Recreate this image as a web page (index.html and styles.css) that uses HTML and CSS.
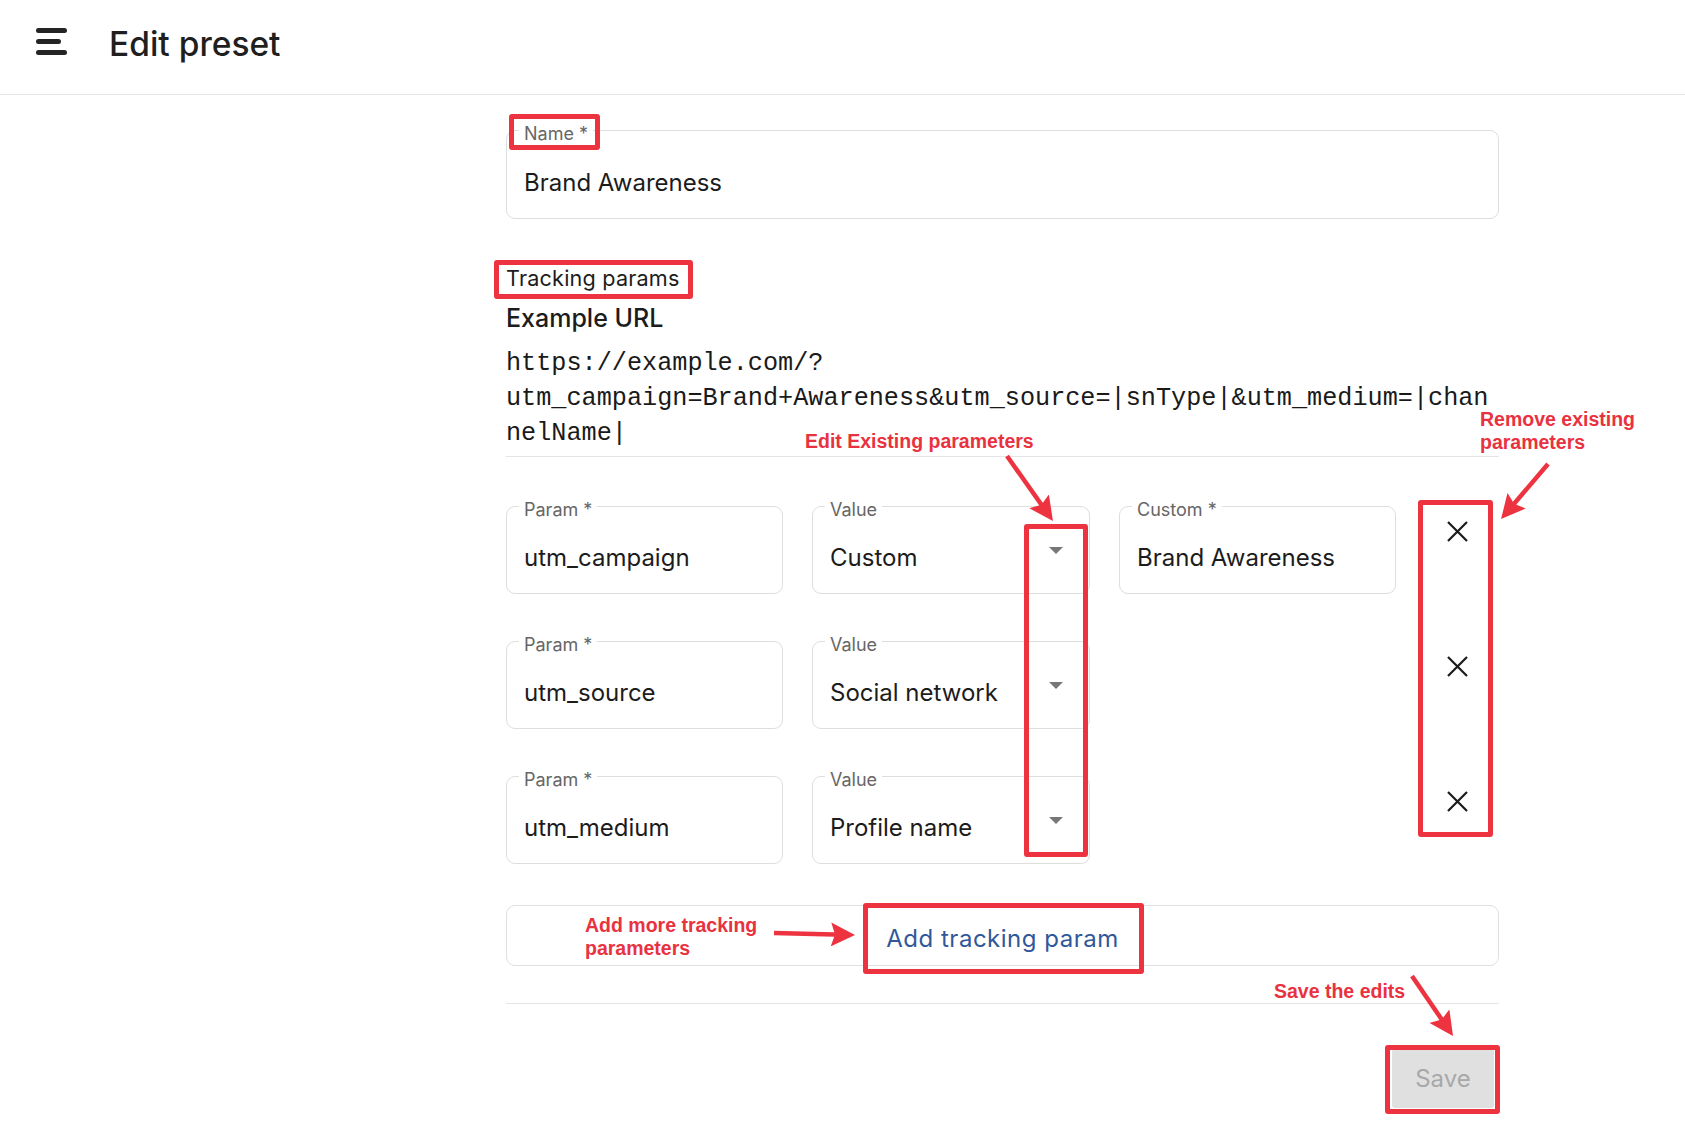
FILE: index.html
```html
<!DOCTYPE html>
<html lang="en">
<head>
<meta charset="utf-8">
<title>Edit preset</title>
<link rel="stylesheet" href="styles.css">
</head>
<body>
<header class="topbar">
  <button class="menu-btn" type="button" aria-label="Menu">
    <svg width="31" height="28" viewBox="0 0 31 28"><path d="M2.5 2.5H28.5M2.5 13.5H22.5M2.5 24.5H28.5" stroke="#242424" stroke-width="5" stroke-linecap="round" fill="none"/></svg>
  </button>
  <h1 class="title">Edit preset</h1>
</header>

<main class="content">
  <form class="form">
    <div class="field field-name">
      <span class="field-label">Name *</span>
      <span class="field-value">Brand Awareness</span>
    </div>

    <div class="section-label">Tracking params</div>
    <h2 class="subheading">Example URL</h2>
    <p class="url">https://example.com/?<br>utm_campaign=Brand+Awareness&amp;utm_source=|snType|&amp;utm_medium=|channelName|</p>
    <hr class="divider">

    <div class="param-rows">
      <div class="param-row">
        <div class="field"><span class="field-label">Param *</span><span class="field-value">utm_campaign</span></div>
        <div class="field field-select"><span class="field-label">Value</span><span class="field-value">Custom</span><span class="caret"></span></div>
        <div class="field"><span class="field-label">Custom *</span><span class="field-value">Brand Awareness</span></div>
        <button class="remove-btn" type="button" aria-label="Remove"><svg width="21" height="21" viewBox="0 0 21 21"><path d="M1 1L20 20M20 1L1 20" stroke="#1a1a1a" stroke-width="2.2" fill="none"/></svg></button>
      </div>
      <div class="param-row">
        <div class="field"><span class="field-label">Param *</span><span class="field-value">utm_source</span></div>
        <div class="field field-select"><span class="field-label">Value</span><span class="field-value">Social network</span><span class="caret"></span></div>
        <div class="empty-cell"></div>
        <button class="remove-btn" type="button" aria-label="Remove"><svg width="21" height="21" viewBox="0 0 21 21"><path d="M1 1L20 20M20 1L1 20" stroke="#1a1a1a" stroke-width="2.2" fill="none"/></svg></button>
      </div>
      <div class="param-row">
        <div class="field"><span class="field-label">Param *</span><span class="field-value">utm_medium</span></div>
        <div class="field field-select"><span class="field-label">Value</span><span class="field-value">Profile name</span><span class="caret"></span></div>
        <div class="empty-cell"></div>
        <button class="remove-btn" type="button" aria-label="Remove"><svg width="21" height="21" viewBox="0 0 21 21"><path d="M1 1L20 20M20 1L1 20" stroke="#1a1a1a" stroke-width="2.2" fill="none"/></svg></button>
      </div>
    </div>

    <div class="add-box">
      <button class="add-btn" type="button">Add tracking param</button>
    </div>
    <hr class="divider divider-bottom">

    <div class="actions">
      <button class="save-btn" type="button">Save</button>
    </div>
  </form>
</main>

<div class="annotations">
  <div class="mark mark-name"></div>
  <div class="mark mark-tracking"></div>
  <div class="mark mark-carets"></div>
  <div class="mark mark-remove"></div>
  <div class="mark mark-add"></div>
  <div class="mark mark-save"></div>

  <div class="note note-edit">Edit Existing parameters</div>
  <div class="note note-remove">Remove existing<br>parameters</div>
  <div class="note note-add">Add more tracking<br>parameters</div>
  <div class="note note-save">Save the edits</div>

  <svg class="arrows" width="1685" height="1126" viewBox="0 0 1685 1126">
    <defs>
      <marker id="head" markerUnits="userSpaceOnUse" markerWidth="24" markerHeight="24" viewBox="0 0 24 24" refX="13" refY="12" orient="auto">
        <path d="M0 0L24 12L0 24L4 12Z" fill="#ee3340"/>
      </marker>
    </defs>
    <line x1="1007" y1="456" x2="1046.6" y2="512" stroke="#ee3340" stroke-width="4.5" marker-end="url(#head)"/>
    <line x1="1548" y1="464" x2="1508.2" y2="510.6" stroke="#ee3340" stroke-width="4.5" marker-end="url(#head)"/>
    <line x1="774" y1="933" x2="844" y2="934.7" stroke="#ee3340" stroke-width="4.5" marker-end="url(#head)"/>
    <line x1="1412" y1="976" x2="1446.8" y2="1026.9" stroke="#ee3340" stroke-width="4.5" marker-end="url(#head)"/>
  </svg>
</div>
</body>
</html>
```

FILE: styles.css
```css
* { box-sizing: border-box; }

html, body {
  margin: 0;
  padding: 0;
  background: #ffffff;
}

body {
  position: relative;
  min-height: 1126px;
  font-family: Inter, "Noto Sans", sans-serif;
  color: #1c1c1c;
}

/* ---------- header ---------- */
.topbar {
  height: 95px;
  display: flex;
  align-items: center;
  gap: 42px;
  padding: 0 0 11px 36px;
  border-bottom: 1px solid #e6e6e6;
}

.menu-btn {
  display: flex;
  width: 31px;
  height: 28px;
  padding: 0;
  border: 0;
  background: none;
}

.title {
  margin: 4px 0 0;
  font-size: 33.5px;
  line-height: 34px;
  font-weight: 500;
  color: #1f1f1f;
}

/* ---------- form ---------- */
.form {
  width: 993px;
  margin-left: 506px;
  padding-top: 35px;
  display: flex;
  flex-direction: column;
}

.field {
  position: relative;
  height: 88px;
  display: flex;
  align-items: center;
  padding: 0 17px;
  border: 1px solid #dedede;
  border-radius: 9px;
  background: #fff;
}

.field-name { height: 89px; }

.field-label {
  position: absolute;
  top: -7px;
  left: 12px;
  padding: 0 5px;
  background: #fff;
  font-size: 18px;
  line-height: 20px;
  color: #666666;
}

.field-value {
  flex: 1;
  padding-top: 16px;
  font-size: 24px;
  line-height: 24px;
  color: #1c1c1c;
  white-space: nowrap;
}

.field-select { padding-right: 26px; }

.caret {
  width: 0;
  height: 0;
  border-left: 7px solid transparent;
  border-right: 7px solid transparent;
  border-top: 7px solid #777777;
}

.section-label {
  margin-top: 46px;
  font-size: 21.6px;
  line-height: 26px;
  color: #1c1c1c;
  letter-spacing: 0.2px;
}

.subheading {
  margin: 11px 0 0;
  font-size: 25px;
  line-height: 32px;
  font-weight: 500;
  color: #1c1c1c;
}

.url {
  margin: 12px 0 0;
  font-family: "Liberation Mono", "Courier New", monospace;
  font-size: 25.2px;
  line-height: 35px;
  color: #1a1a1a;
  word-break: break-all;
}

.divider {
  margin: 5px 0 0;
  border: 0;
  border-top: 1px solid #e4e4e4;
  height: 0;
}

.param-rows {
  margin-top: 49px;
  display: flex;
  flex-direction: column;
  gap: 47px;
}

.param-row {
  display: grid;
  grid-template-columns: 277px 278px 277px 1fr;
  column-gap: 29px;
}

.remove-btn {
  align-self: start;
  justify-self: start;
  width: 48px;
  height: 48px;
  margin: 1px 0 0 8px;
  padding: 0;
  border: 0;
  background: none;
  display: flex;
  align-items: center;
  justify-content: center;
}

.add-box {
  margin-top: 41px;
  height: 61px;
  border: 1px solid #e0e0e0;
  border-radius: 9px;
  display: flex;
  align-items: center;
  justify-content: center;
}

.add-btn {
  border: 0;
  background: none;
  padding: 5px 0 0;
  font-family: Inter, "Noto Sans", sans-serif;
  font-size: 24px;
  letter-spacing: 0.5px;
  color: #30589b;
}

.divider-bottom { margin-top: 37px; }

.actions {
  margin-top: 45px;
  display: flex;
  justify-content: flex-end;
  padding-right: 5px;
}

.save-btn {
  width: 102px;
  height: 59px;
  border: 0;
  border-radius: 3px;
  background: #e0e0e0;
  color: #a8a8a8;
  font-family: Inter, "Noto Sans", sans-serif;
  font-size: 24px;
}

/* ---------- annotations ---------- */
.annotations {
  position: absolute;
  inset: 0;
  pointer-events: none;
}

.mark {
  position: absolute;
  border: 5px solid #ee3340;
  border-radius: 3px;
}

.mark-name     { left: 509px;  top: 114px;  width: 91px;  height: 36px; }
.mark-tracking { left: 494px;  top: 260px;  width: 199px; height: 39px; }
.mark-carets   { left: 1024px; top: 524px;  width: 64px;  height: 333px; }
.mark-remove   { left: 1418px; top: 500px;  width: 75px;  height: 337px; }
.mark-add      { left: 863px;  top: 903px;  width: 281px; height: 71px; }
.mark-save     { left: 1385px; top: 1045px; width: 115px; height: 69px; }

.note {
  position: absolute;
  font-family: "Liberation Sans", Arial, sans-serif;
  font-weight: 700;
  font-size: 19.5px;
  line-height: 23px;
  color: #e9323f;
  white-space: nowrap;
}

.note-edit   { left: 805px;  top: 431px; line-height: 21px; }
.note-remove { left: 1480px; top: 408px; }
.note-add    { left: 585px;  top: 914px; }
.note-save   { left: 1274px; top: 980px; }

.arrows {
  position: absolute;
  left: 0;
  top: 0;
}
```
